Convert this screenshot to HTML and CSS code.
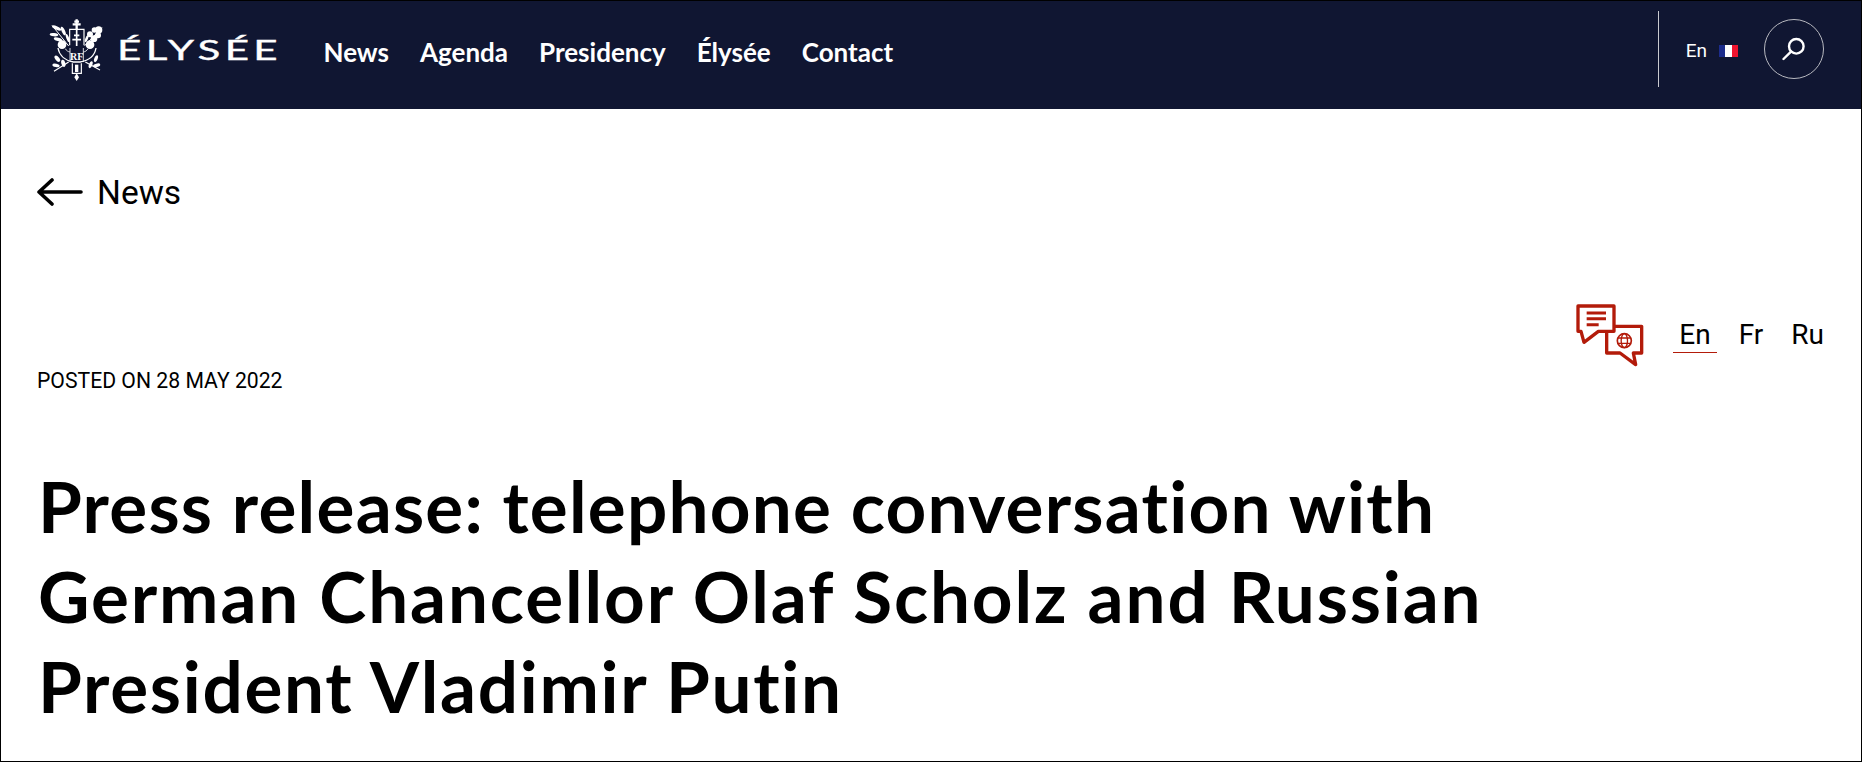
FILE: index.html
```html
<!DOCTYPE html>
<html lang="en">
<head>
<meta charset="utf-8">
<title>Press release: telephone conversation</title>
<link rel="stylesheet" href="styles.css">
</head>
<body>
<div class="page">
  <header class="topbar">
    <a class="brand" href="#">
      <svg class="emblem" viewBox="0 0 180 198" fill="none" stroke="#fff" stroke-width="4">
        <path d="M92 10v30M80 25h24M85 17h14" stroke-width="7"/>
        <path d="M71 88V40h43v48" stroke-width="3.500"/>
        <path d="M92 42v48M84 58h16M79 71h26" stroke-width="5"/>
        <path d="M36 96c4 24 24 38 46 42h20c24-4 44-18 48-42" stroke-width="4"/>
        <path d="M72 96v42M112 96v42M58 98c3 6 8 9 14 10M126 98c-3 6-8 9-14 10" stroke-width="2.500"/>
        <text x="92" y="131" class="rf" text-anchor="middle">RF</text>
        <path d="M18 28l50 62" stroke-width="3"/>
        <path d="M168 35l-52 54" stroke-width="3"/>
        <g fill="#fff" stroke="none">
          <ellipse cx="32" cy="36" rx="15" ry="5" transform="rotate(25 32 36)"/>
          <ellipse cx="24" cy="56" rx="13" ry="5" transform="rotate(5 24 56)"/>
          <ellipse cx="52" cy="45" rx="14" ry="5" transform="rotate(65 52 45)"/>
          <ellipse cx="36" cy="70" rx="13" ry="5" transform="rotate(15 36 70)"/>
          <ellipse cx="65" cy="66" rx="13" ry="4" transform="rotate(70 65 66)"/>
          <circle cx="48" cy="86" r="13"/>
          <circle cx="158" cy="42" r="11"/>
          <circle cx="145" cy="42" r="8"/>
          <circle cx="156" cy="58" r="9"/>
          <circle cx="132" cy="55" r="9"/>
          <circle cx="144" cy="68" r="10"/>
          <ellipse cx="122" cy="68" rx="11" ry="4" transform="rotate(-70 122 68)"/>
          <circle cx="132" cy="86" r="13"/>
          <ellipse cx="34" cy="128" rx="11" ry="6" transform="rotate(50 34 128)"/>
          <ellipse cx="52" cy="142" rx="11" ry="6" transform="rotate(75 52 142)"/>
          <ellipse cx="30" cy="148" rx="11" ry="5" transform="rotate(10 30 148)"/>
          <ellipse cx="150" cy="128" rx="11" ry="5" transform="rotate(-70 150 128)"/>
          <ellipse cx="134" cy="146" rx="11" ry="5" transform="rotate(-70 134 146)"/>
          <ellipse cx="152" cy="148" rx="11" ry="5" transform="rotate(-15 152 148)"/>
          <rect x="87" y="146" width="10" height="22"/>
          <path d="M92 172l7 12-7 11-7-11z"/>
        </g>
        <path d="M24 166l44-28M162 162l-44-24" stroke-width="3.500"/>
        <path d="M79 142v30h27v-30" stroke-width="3.500"/>
      </svg>
      <span class="wordmark">ÉLYSÉE</span>
    </a>
    <nav class="mainnav">
      <a href="#">News</a>
      <a href="#">Agenda</a>
      <a href="#">Presidency</a>
      <a href="#">Élysée</a>
      <a href="#">Contact</a>
    </nav>
    <div class="tools">
      <a class="sitelang" href="#">En
        <span class="flag"><i class="blue"></i><i class="white"></i><i class="red"></i></span>
      </a>
      <a class="search" href="#" aria-label="Search">
        <svg viewBox="0 0 24 24" width="24" height="24" fill="none" stroke="#fff" stroke-width="2.400"><circle cx="14.3" cy="9.3" r="7.3"/><path d="M9 14.6L1.500 22" stroke-linecap="round"/></svg>
      </a>
    </div>
  </header>
  <main class="content">
    <a class="back" href="#">
      <svg class="backarrow" viewBox="0 0 46 28" width="46" height="28" fill="none" stroke="#000" stroke-width="3.600" stroke-linecap="round" stroke-linejoin="round"><path d="M44 14H2M15 2L2 14l13 12"/></svg>
      <span>News</span>
    </a>
    <div class="meta">
      <span class="posted">Posted on 28 May 2022</span>
      <div class="langs">
        <svg class="langicon" viewBox="0 0 240 216" width="80" height="72" fill="none" stroke="#b31b0a" stroke-width="10" stroke-linejoin="round">
          <path d="M24 24h108v76H85l-43 33-9-33h-9z"/>
          <path d="M50 45h58M50 62h58M50 80h36" stroke-width="9"/>
          <path d="M132 85h83v80h-25l7 35-47-35h-40v-65"/>
          <circle cx="163" cy="128" r="21" stroke-width="5"/>
          <ellipse cx="163" cy="128" rx="9.500" ry="21" stroke-width="4"/>
          <path d="M143 120h40M143 136h40" stroke-width="4"/>
        </svg>
        <a class="lang current" href="#">En</a>
        <a class="lang" href="#">Fr</a>
        <a class="lang" href="#">Ru</a>
      </div>
    </div>
    <h1 class="title"><span class="line one">Press release: telephone conversation with</span> <span class="line two">German Chancellor Olaf Scholz and Russian</span> <span class="line three">President Vladimir Putin</span></h1>
  </main>
</div>
</body>
</html>
```

FILE: styles.css
```css
* { box-sizing: border-box; }
html, body { margin: 0; padding: 0; }
body { background: #fff; color: #000; font-family: Roboto, "Liberation Sans", sans-serif; }
a { color: inherit; text-decoration: none; }

.page { width: 1862px; height: 762px; border: 1px solid #000; overflow: hidden; }

.topbar {
  height: 108px;
  background: #101632;
  color: #fff;
  display: flex;
  align-items: center;
  padding: 0 0 12px 45px;
}
.brand { display: flex; align-items: center; gap: 10.5px; }
.emblem { width: 60px; height: 66px; display: block; }
.rf { font: 700 30px "Liberation Serif", serif; fill: #fff; stroke: none; }
.wordmark { display: inline-block; width: 105px; font: 400 27px/1 Lato, sans-serif; letter-spacing: 2.8px; white-space: nowrap; transform: scaleX(1.56); transform-origin: left; -webkit-text-stroke: 0.35px #fff; }

.mainnav { display: flex; gap: 31px; margin: 6px 0 0 102px; font: 700 26px/1 Lato, sans-serif; }

.tools { margin-left: auto; display: flex; align-items: center; height: 76px; border-left: 1px solid #c9cad0; padding-left: 27px; padding-right: 37px; }
.sitelang { display: flex; align-items: center; gap: 12px; font-size: 19px; padding-top: 3px; }
.flag { display: flex; width: 19px; height: 12px; }
.flag i { flex: 1; }
.flag .blue { background: #1c2c8c; }
.flag .white { background: #fff; }
.flag .red { background: #f0142f; }
.search { margin-left: 26px; width: 60px; height: 60px; border: 1.5px solid #b8b9c0; border-radius: 50%; display: flex; align-items: center; justify-content: center; }

.content { padding: 65px 37px 0; }
.back { display: flex; align-items: center; gap: 14px; font-size: 33.5px; line-height: 38px; margin-left: -1px; }
.backarrow { margin-top: -2px; }
.meta { display: flex; justify-content: space-between; align-items: flex-start; margin-top: 91px; }
.posted { font-size: 21.2px; line-height: 24px; text-transform: uppercase; margin: 66px 0 0 -1px; }
.langs { display: flex; align-items: flex-start; }
.langicon { display: block; margin: -5px 23px 0 0; }
.lang { font-size: 28px; line-height: 32px; padding: 16px 6.5px 1px; margin-right: 15px; border-bottom: 1px solid transparent; }
.lang:last-child { margin-right: 0; padding-right: 0; }
.current { border-bottom-color: #b31b0a; }

.title { margin: 68px 0 0; font: 700 71px/90px Lato, sans-serif; }
.line { display: block; }
.one { letter-spacing: 1.23px; }
.two { letter-spacing: 1.86px; }
.three { letter-spacing: 1.7px; }
```
